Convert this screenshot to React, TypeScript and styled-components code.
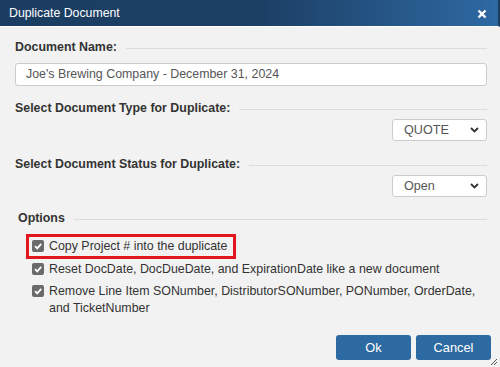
import React from "react"
import styled, { createGlobalStyle } from "styled-components"

const GlobalStyle = createGlobalStyle`
	html, body {
		margin: 0;
		padding: 0;
		background: #f2f2f2;
		font-family: "Liberation Sans", Arial, sans-serif;
	}
`

const options = [
	{ text: "Copy Project # into the duplicate", highlight: true },
	{ text: "Reset DocDate, DocDueDate, and ExpirationDate like a new document" },
	{ text: "Remove Line Item SONumber, DistributorSONumber, PONumber, OrderDate, and TicketNumber" },
]

const Check = () => (
	<CheckBox>
		<svg width="10" height="10" viewBox="0 0 10 10">
			<path d="M2 5.2 L4.2 7.4 L8.2 2.8" fill="none" stroke="#fff" strokeWidth="1.8" />
		</svg>
	</CheckBox>
)

const Chevron = () => (
	<svg width="9" height="6" viewBox="0 0 9 6">
		<path d="M1 1 L4.5 4.5 L8 1" fill="none" stroke="#333" strokeWidth="1.8" />
	</svg>
)

export default function App() {
	return (
		<Dialog>
			<GlobalStyle />
			<TitleBar>
				<Title>Duplicate Document</Title>
				<Close>
					<svg width="10" height="10" viewBox="0 0 10 10">
						<path d="M1.5 1.5 L8.5 8.5 M8.5 1.5 L1.5 8.5" stroke="#fff" strokeWidth="2.4" />
					</svg>
				</Close>
			</TitleBar>
			<Body>
				<Legend $top={10}>
					<span>Document Name:</span>
					<Rule />
				</Legend>
				<TextInput>Joe's Brewing Company - December 31, 2024</TextInput>

				<Legend $top={12}>
					<span>Select Document Type for Duplicate:</span>
					<Rule />
				</Legend>
				<SelectRow>
					<Select>
						<span>QUOTE</span>
						<Chevron />
					</Select>
				</SelectRow>

				<Legend $top={13}>
					<span>Select Document Status for Duplicate:</span>
					<Rule />
				</Legend>
				<SelectRow>
					<Select>
						<span>Open</span>
						<Chevron />
					</Select>
				</SelectRow>

				<Legend $top={11} $indent={3}>
					<span>Options</span>
					<Rule />
				</Legend>
				<OptionList>
					{options.map((o) => (
						<OptionRow key={o.text} $highlight={!!o.highlight}>
							<Check />
							<OptionText>{o.text}</OptionText>
						</OptionRow>
					))}
				</OptionList>

				<Footer>
					<Button>Ok</Button>
					<Button>Cancel</Button>
				</Footer>
			</Body>
			<Grip>
				<svg width="8" height="8" viewBox="0 0 8 8">
					<path d="M7 1 L1 7 M7 4 L4 7" stroke="#555" strokeWidth="1" />
				</svg>
			</Grip>
		</Dialog>
	)
}

const Dialog = styled.div`
	position: relative;
	width: 500px;
	height: 367px;
	background: #f2f2f2;
	overflow: hidden;
	color: #333;
`

const TitleBar = styled.div`
	display: flex;
	align-items: center;
	justify-content: space-between;
	height: 26px;
	width: 480px;
	padding: 0 9px;
	background: linear-gradient(to right, #1b3d62 0%, #1c3f64 52%, #2e69a3 100%);
	border-bottom: 1px solid #fff;
	border-right: 2px solid #1d3c5e;
`

const Title = styled.div`
	color: #fff;
	font-size: 12.3px;
	line-height: 26px;
`

const Close = styled.div`
	display: flex;
	align-items: center;
	margin-right: 2px;
	margin-top: 1px;
`

const Body = styled.div`
	padding: 0 13px 0 15px;
`

const Legend = styled.div<{ $top: number; $indent?: number }>`
	display: flex;
	align-items: center;
	gap: 9px;
	height: 20px;
	margin-top: ${(p) => p.$top}px;
	padding-left: ${(p) => p.$indent ?? 0}px;
	font-size: 12.4px;
	font-weight: bold;
	color: #333;
	white-space: nowrap;
`

const Rule = styled.div`
	flex: 1;
	height: 0;
	border-top: 1px solid #dcdcdc;
	margin-top: 2px;
`

const TextInput = styled.div`
	margin-top: 6px;
	height: 23px;
	box-sizing: border-box;
	padding: 0 10px;
	line-height: 21px;
	background: #fff;
	border: 1px solid #ccc;
	border-radius: 3px;
	font-size: 12.4px;
	color: #555;
`

const SelectRow = styled.div`
	display: flex;
	justify-content: flex-end;
	margin-top: 1px;
`

const Select = styled.div`
	display: flex;
	align-items: center;
	justify-content: space-between;
	width: 95px;
	height: 22px;
	box-sizing: border-box;
	padding: 0 7px 0 11px;
	background: #fff;
	border: 1px solid #ccc;
	border-radius: 3px;
	font-size: 12.6px;
	color: #555;
`

const OptionList = styled.div`
	display: flex;
	flex-direction: column;
	gap: 5px;
	margin-top: 6px;
	padding-left: 11px;
`

const OptionRow = styled.div<{ $highlight: boolean }>`
	display: flex;
	align-items: flex-start;
	gap: 5px;
	align-self: flex-start;
	padding: ${(p) => (p.$highlight ? "1px 6px 1px 3px" : "0 0 0 6px")};
	border: ${(p) => (p.$highlight ? "3px solid #e3161d" : "none")};
	margin-bottom: ${(p) => (p.$highlight ? "-3px" : "0")};
`

const CheckBox = styled.span`
	flex: none;
	display: flex;
	align-items: center;
	justify-content: center;
	width: 12px;
	height: 12px;
	margin-top: 2px;
	background: #6a6a6a;
	border-radius: 2px;
`

const OptionText = styled.span`
	font-size: 12.4px;
	line-height: 17px;
	color: #333;
`

const Footer = styled.div`
	display: flex;
	justify-content: flex-end;
	gap: 5px;
	margin-top: 18px;
	margin-right: -4px;
`

const Button = styled.button`
	width: 75px;
	height: 25px;
	border: none;
	border-radius: 3px;
	background: #2d6aa1;
	color: #fff;
	font-family: "Liberation Sans", Arial, sans-serif;
	font-size: 12.8px;
	padding: 0;
`

const Grip = styled.div`
	position: absolute;
	right: 2px;
	bottom: 1px;
	display: flex;
`
